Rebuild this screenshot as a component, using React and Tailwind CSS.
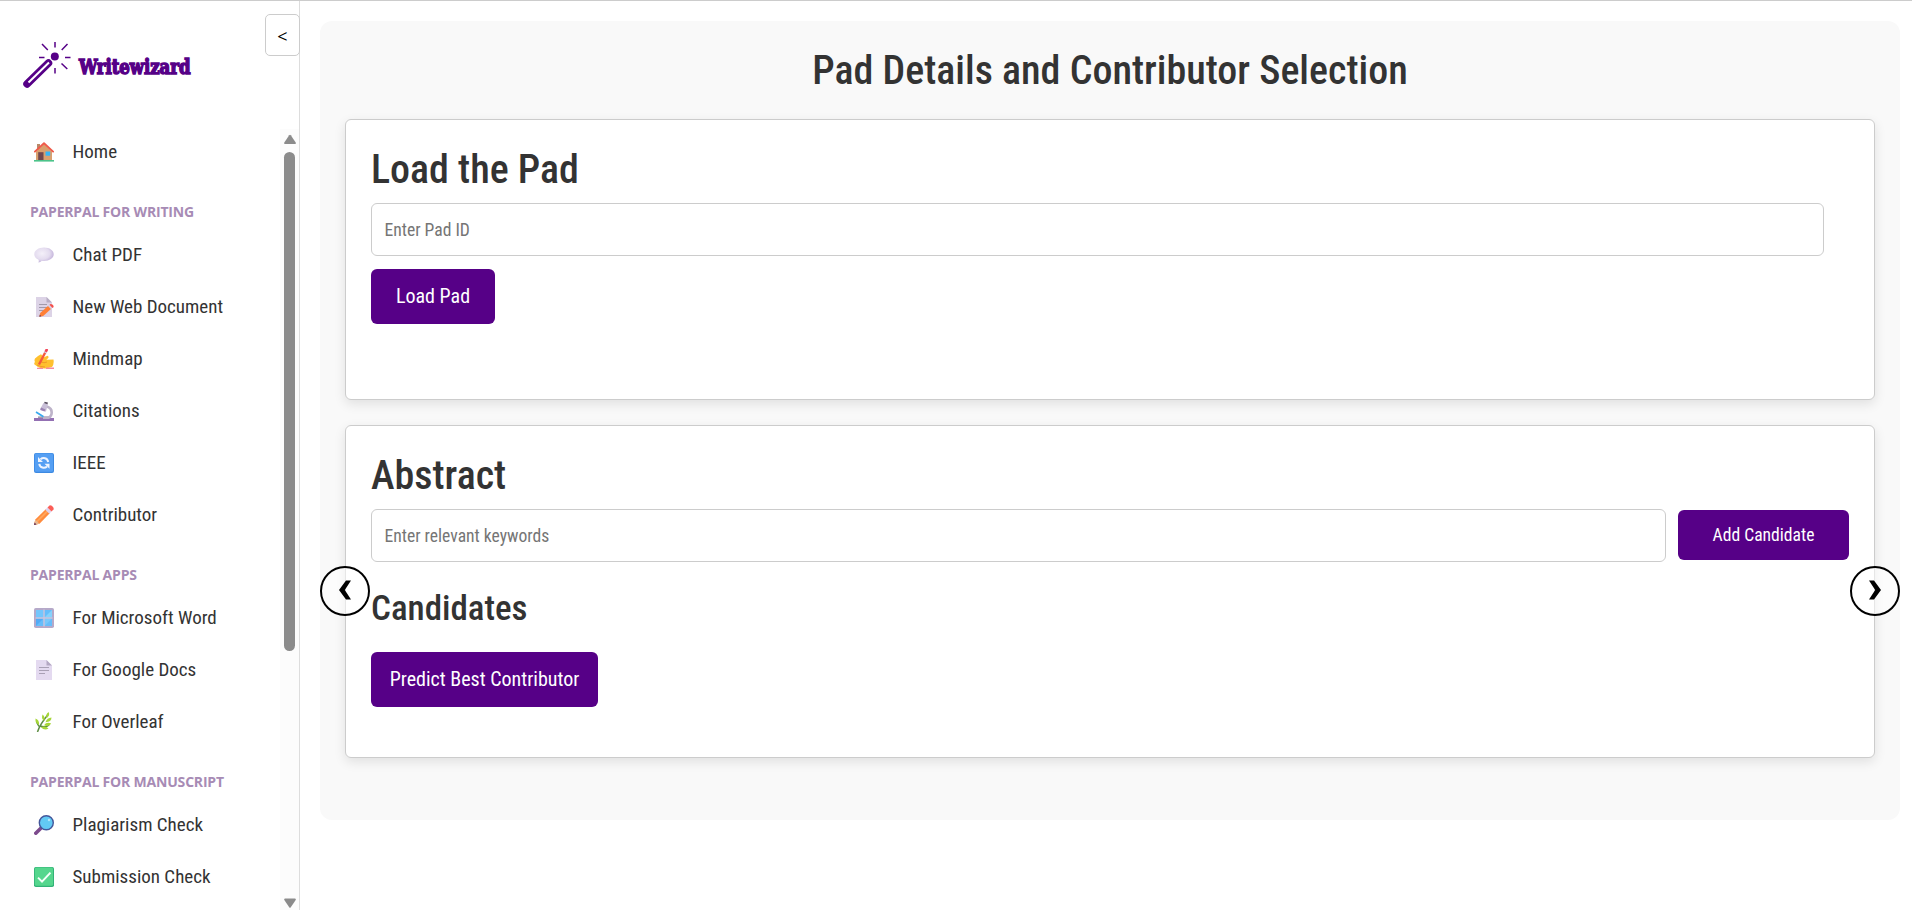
const ICONS = {
  home: (
    <>
      <path d="M3 2h3v6H3z" fill="#b98a6a" />
      <path d="M2 9.5 10 2l8 7.500V18.500H2z" fill="#d9a06e" />
      <path d="M4.200 10.200h5.300v8.300H4.200z" fill="#71484f" />
      <path d="M11.500 9.500h4.700v4.200h-4.700z" fill="#38b6f5" />
      <path d="M.9 9.600 10 1.300l9.100 8.300" fill="none" stroke="#ef5a4a" strokeWidth="1.900" strokeLinecap="round" strokeLinejoin="round" />
      <path d="M0 18h20v1.600H0z" fill="#4cc38a" />
    </>
  ),
  chat: (
    <>
      <defs>
        <radialGradient id="bubble" cx=".4" cy=".4" r=".65">
          <stop offset="0" stopColor="#f4f0f9" />
          <stop offset=".6" stopColor="#e4dcef" />
          <stop offset="1" stopColor="#bfaed8" />
        </radialGradient>
      </defs>
      <path d="M10 2.500c5.500 0 9.700 2.900 9.700 6.700s-4.200 6.700-9.700 6.700c-.8 0-1.600 0-2.300-.2-.8 1.100-2 1.600-3.300 1.700.4-.7.500-1.600.2-2.700C2 13.500.3 11.500.3 9.200.3 5.400 4.500 2.500 10 2.500z" fill="url(#bubble)" />
    </>
  ),
  memo: (
    <>
      <path d="M2 0h10.500L18 5.500V20H2z" fill="#dcd3e6" />
      <path d="M12.500 0 18 5.500h-5.500z" fill="#b7adc4" />
      <path d="M5 7.500h8M5 10.500h8M5 13.500h5" stroke="#a29aab" strokeWidth="1" />
      <path d="m5.300 19.700.9-3.800 8-7.100 3 3-8 7.200z" fill="#ff7f35" />
      <path d="m14 9 1.500-1.300 3 3L17 12z" fill="#d8cfe6" />
      <path d="m15.500 7.700 1-.6q2.800.1 3.200 2.800l-1.200 1z" fill="#f4504b" />
      <path d="m5.300 19.700.5-2 1.500 1.500z" fill="#5a3157" />
    </>
  ),
  hand: (
    <>
      <path d="M1 9.500q3-2.800 6-4.200l3 3 3.500-1.600q1.500.6.8 2.200l-2 1.800 7.200-.2q.8 4.500-1.500 7.500l-6 1.500q-5 .3-8-1.500L.5 15.500q-.8-1.500.5-2.500-1-1.500 0-3.500z" fill="#ffc02e" />
      <path d="M7 13q3 1.500 6 0M3 16q4 2 8 2" stroke="#ef9a27" fill="none" />
      <path d="M5 15.500 12.500 1" stroke="#f4583f" strokeWidth="2.400" />
      <path d="m11 3.900.8-1.500" stroke="#d7cbe8" strokeWidth="2.600" />
      <path d="m12.200 1.700.5-.8" stroke="#f2455a" strokeWidth="2.600" strokeLinecap="round" />
      <path d="M12 18.500h8V20h-8zM3 18.800h6V20H3z" fill="#f58aa0" />
    </>
  ),
  microscope: (
    <>
      <path d="M0 17h20v3H0z" fill="#9370b3" />
      <path d="M4 16.800h13v-1.300H4z" fill="#8e8698" />
      <path d="M13 5.500q5.800 2 4.400 8-.8 2.500-3 3.200H9" fill="none" stroke="#bdb3c9" strokeWidth="2.600" />
      <path d="m9.400 2 4.500 1.200-2 7.500L6 8.500z" fill="#c9bfd8" />
      <path d="m7 6.500 4.500 2-1 2-4.200-1.500z" fill="#9b84b4" />
      <path d="m10.600.8 3.300.8-.4 1.600-3.300-.9z" fill="#594f61" />
      <path d="m2 11 7.500 4.800" stroke="#38a9ef" strokeWidth="1.700" />
    </>
  ),
  refresh: (
    <>
      <rect width="20" height="20" rx="2" fill="#3d8ae2" />
      <rect x=".8" y=".6" width="18.200" height="18.200" rx="1.500" fill="#559ff3" />
      <path d="M6.500 6.200C9 4.300 13.500 4.600 14.200 9" fill="none" stroke="#eef4ff" strokeWidth="2" />
      <path d="M13 13.600c-2.500 1.900-7 1.600-7.700-2.800" fill="none" stroke="#eef4ff" strokeWidth="2" />
      <path d="M4 4v5h5zM15.500 15.800v-5h-5z" fill="#eef4ff" />
    </>
  ),
  pencil: (
    <>
      <path d="m0 20 1.300-5.500L12 4l4 4L5.500 18.700z" fill="#ff8b3d" />
      <path d="m3 16.500 11-10.800" stroke="#ffa65c" strokeWidth="1.800" />
      <path d="m0 20 1.300-5.500 4.200 4.200z" fill="#e8b891" />
      <path d="m0 20 .6-2.500 1.900 1.900z" fill="#5a2a57" />
      <path d="m11.300 4.700 2.200-2.200 4 4-2.200 2.200z" fill="#ddd2ee" />
      <path d="M13.500 2.500 15.800.3q3.500.3 4 3.900l-2.300 2.300z" fill="#fb5d57" />
    </>
  ),
  window: (
    <>
      <rect width="20" height="20" rx="1.800" fill="#b5a9c9" />
      <rect x="2" y="2" width="16" height="16" fill="#66bdfa" />
      <path d="M2 2h7.500v7.500H2z" fill="#74c6fc" />
      <path d="M10.500 9.500h7.500V2z" fill="#84d2fc" />
      <path d="M10.500 18V10.500H18z" fill="#78c8fb" />
      <path d="M2 18v-7.500h7.500z" fill="#52abf6" />
      <path d="M10 1.500v17M1.500 10h17" stroke="#cdc4dc" strokeWidth="1.400" />
    </>
  ),
  page: (
    <>
      <path d="M2 0h10.500L18 5.500V20H2z" fill="#e4daf0" />
      <path d="M12.500 0 18 5.500h-5.500z" fill="#b4a8c3" />
      <path d="M5 7.500h10M5 10.500h10M5 13.500h6" stroke="#a9a0b5" strokeWidth="1.100" />
    </>
  ),
  leaf: (
    <>
      <path d="M3.500 20Q6 12 14.500 2M5 14.500 2.500 10M6 14q6 2 9-1" stroke="#5d8d43" strokeWidth="1.500" fill="none" />
      <g fill="#a6d638">
        <path d="M14.500 0q2 2.800-1.800 6.300Q11 3 14.500 0z" />
        <path d="M8.500 2.500q3 2 1.800 6.500Q7 7 8.500 2.500z" />
        <path d="M1.500 6.500q4 1.300 3.600 6.500Q.9 11 1.500 6.500z" />
        <path d="M17.500 5.500q0 4.500-6 4.700Q13 5.800 17.500 5.500z" />
        <path d="M17.200 11.500q-2.500 4-7.200 1.800 2.500-3.800 7.200-1.800z" />
        <path d="M14.500 16.500q-4 2.500-7.500-1.300 4.500-1.700 7.500 1.300z" />
      </g>
    </>
  ),
  lens: (
    <>
      <path d="m1.800 18.200 6-6" stroke="#7d4b8d" strokeWidth="3.600" strokeLinecap="round" />
      <circle cx="12.300" cy="7.700" r="7" fill="#62c9f4" stroke="#44579b" strokeWidth="1.400" />
      <circle cx="15" cy="5" r="1.200" fill="#b3e6fb" />
    </>
  ),
  check: (
    <>
      <rect width="20" height="20" rx="1.800" fill="#32b277" />
      <rect x=".8" y=".6" width="18.200" height="18.200" rx="1.500" fill="#55d68d" />
      <path d="m4 10.600 4 4 8.500-9" fill="none" stroke="#f4fff9" strokeWidth="2" />
    </>
  ),
};

const SECTIONS = [
  { title: null, items: [["home", "Home"]] },
  {
    title: "PAPERPAL FOR WRITING",
    items: [
      ["chat", "Chat PDF"],
      ["memo", "New Web Document"],
      ["hand", "Mindmap"],
      ["microscope", "Citations"],
      ["refresh", "IEEE"],
      ["pencil", "Contributor"],
    ],
  },
  {
    title: "PAPERPAL APPS",
    items: [
      ["window", "For Microsoft Word"],
      ["page", "For Google Docs"],
      ["leaf", "For Overleaf"],
    ],
  },
  {
    title: "PAPERPAL FOR MANUSCRIPT",
    items: [
      ["lens", "Plagiarism Check"],
      ["check", "Submission Check"],
    ],
  },
];

function Logo() {
  return (
    <svg width="180" height="60" viewBox="20 35 180 60" className="block" fill="none" stroke="#560087">
      <path d="M27 84 48.500 63" strokeWidth="7.500" strokeLinecap="round" />
      <path d="M28.500 82.500 49 62.500" stroke="#fff" strokeWidth="2" />
      <circle cx="54.800" cy="56.600" r="4" fill="#560087" stroke="none" />
      <path d="M55 42v5.500M55 68v5.500M39 57.600h5.500M65 57.600h5.500M42 44l5.800 6M67.500 44l-5.800 6M61.500 63.500l5.800 5.500" strokeWidth="1.500" />
      <text x="79" y="74" fontSize="19.500" fontWeight="900" textLength="111.500" lengthAdjust="spacingAndGlyphs" fill="#560087" strokeWidth="1.400" className="font-['DejaVu_Serif',serif]">
        Writewizard
      </text>
    </svg>
  );
}

function Sidebar() {
  return (
    <aside className="relative flex w-[300px] shrink-0 flex-col border-r border-[#dddddd]">
      <div className="h-[128px] shrink-0 pt-[34px] pl-5">
        <Logo />
      </div>
      <button className="absolute top-[13px] right-[-1px] flex h-[42px] w-[35px] items-center justify-center rounded-[5px] border border-[#cccccc] bg-white pt-[2px] font-['Open_Sans',sans-serif] text-lg text-black font-stretch-normal">
        &lt;
      </button>
      <div className="flex min-h-0 flex-1">
        <nav className="-mt-[3px] flex-1 overflow-hidden">
          {SECTIONS.map(({ title, items }, i) => (
            <div key={i}>
              {title && (
                <h2 className="h-[51px] pt-[25px] pl-[30px] font-['Open_Sans',sans-serif] text-[14px] leading-[18px] font-bold tracking-[-0.19px] whitespace-nowrap text-[#a78bb5] font-stretch-normal">
                  {title}
                </h2>
              )}
              {items.map(([icon, label]) => (
                <a key={label} className="flex h-[52px] items-center gap-[18.5px] pl-[34px] text-[19px] text-[#333333]">
                  <svg width="20" height="20" viewBox="0 0 20 20">
                    {ICONS[icon]}
                  </svg>
                  <span>{label}</span>
                </a>
              ))}
            </div>
          ))}
        </nav>
        <div className="flex w-[19px] flex-col items-center bg-[#fcfcfc] pt-[5px] pb-[2px]">
          <svg width="12" height="11" viewBox="0 0 12 11" fill="#8b8b8b">
            <path d="M5.200 1.200q.8-1 1.600 0L11.700 8.500q.5 1.500-1 1.500H1.300q-1.500 0-1-1.500z" />
          </svg>
          <div className="mt-[7px] h-[499px] w-[11px] rounded-full bg-[#8b8b8b]" />
          <svg width="12" height="10" viewBox="0 0 12 10" fill="#8b8b8b" className="mt-auto">
            <path d="M5.200 9.300q.8 1 1.600 0L11.700 2q.5-1.500-1-1.500H1.300Q-.2.500.3 2z" />
          </svg>
        </div>
      </div>
    </aside>
  );
}

const CARD = "rounded-md border border-[#cccccc] bg-white px-[25px] shadow-[0_4px_12px_rgba(0,0,0,0.1)]";
const INPUT = "block h-[53px] rounded-md border border-[#cccccc] bg-white px-[12.5px] text-[17.6px] text-[#333333] placeholder:text-[#757575]";
const BUTTON = "block rounded-md bg-[#560087] text-white";

function Arrow({ flip }) {
  return (
    <button
      className={
        flip
          ? "absolute top-[545px] right-0 flex size-[50px] items-center justify-center rounded-full border-2 border-black bg-white/50 pb-[2px]"
          : "absolute top-[545px] left-0 flex size-[50px] items-center justify-center rounded-full border-2 border-black bg-white/50 pb-[2px]"
      }
    >
      <svg width="12" height="20" viewBox="0 0 12 20" className={flip ? "-scale-x-100" : ""}>
        <path d="M7 .5h5L5.800 10l6.200 9.500H7L0 10z" fill="#000" />
      </svg>
    </button>
  );
}

export default function App() {
  return (
    <div className="flex h-[910px] overflow-hidden border-t border-[#cccccc] bg-white font-['Roboto_Condensed','Roboto',sans-serif] font-stretch-condensed">
      <Sidebar />
      <main className="flex-1 pt-5 pr-3 pl-5">
        <div className="relative h-[799px] rounded-xl bg-[#f9f9f9] px-[25px] pt-[25px]">
          <h1 className="mb-[25px] h-[48px] pt-px text-center text-[40px] leading-[48px] font-medium text-[#333333]">
            Pad Details and Contributor Selection
          </h1>
          <section className={`${CARD} h-[281px] pt-[25px]`}>
            <h2 className="h-[48px] pt-px text-[40px] leading-[48px] font-medium text-[#333333]">Load the Pad</h2>
            <input className={`${INPUT} mt-[10px] w-[1453px]`} placeholder="Enter Pad ID" />
            <button className={`${BUTTON} mt-[13px] h-[55px] w-[124px] pb-px text-[20px]`}>Load Pad</button>
          </section>
          <section className={`${CARD} mt-[25px] h-[333px] pt-[25px]`}>
            <h2 className="h-[48px] pt-px text-[40px] leading-[48px] font-medium text-[#333333]">Abstract</h2>
            <div className="mt-[10px] flex items-start gap-3">
              <input className={`${INPUT} flex-1`} placeholder="Enter relevant keywords" />
              <button className={`${BUTTON} mt-px h-[50px] w-[171px] text-[17.6px]`}>Add Candidate</button>
            </div>
            <h3 className="mt-[25px] pt-px text-[35px] leading-[42px] font-medium text-[#333333]">Candidates</h3>
            <button className={`${BUTTON} mt-[22px] h-[55px] w-[227px] pb-px text-[20px]`}>Predict Best Contributor</button>
          </section>
          <Arrow />
          <Arrow flip />
        </div>
      </main>
    </div>
  );
}
